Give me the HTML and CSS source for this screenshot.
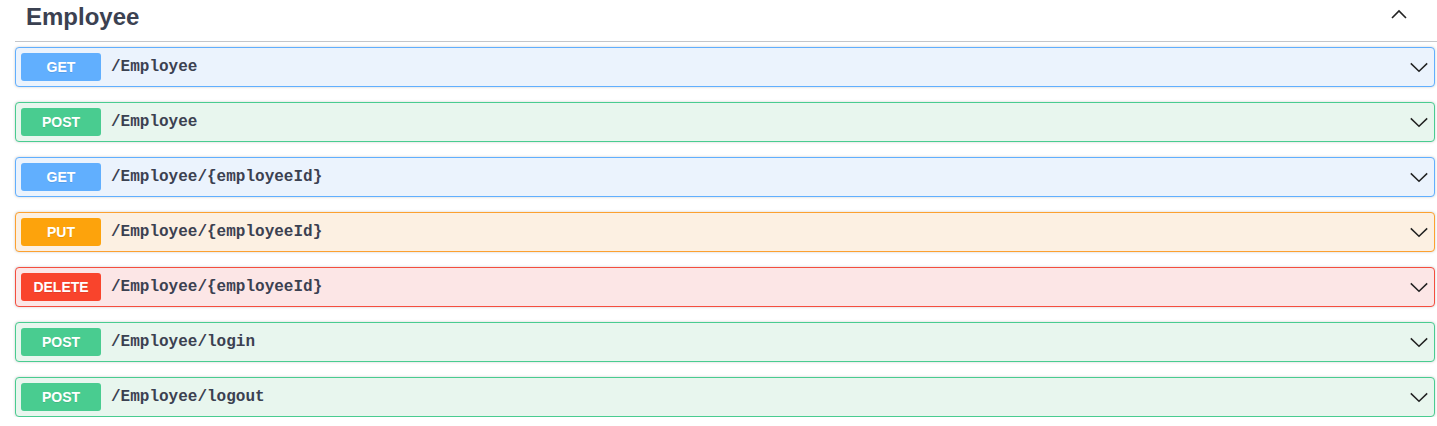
FILE: index.html
```html
<!DOCTYPE html>
<html>
<head>
<meta charset="utf-8">
<link rel="stylesheet" href="styles.css">
</head>
<body>
<div class="tag-section">
  <h4 class="tag-heading">
    <span class="tag-name">Employee</span>
    <span class="tag-toggle">
      <svg width="16" height="10" viewBox="0 0 16 10"><polyline points="1,9 8,2 15,9" fill="none" stroke="#222" stroke-width="1.6"/></svg>
    </span>
  </h4>
  <div class="ops">
    <div class="op op-get"><span class="method">GET</span><span class="path">/Employee</span><svg class="arrow" width="20" height="20" viewBox="0 0 20 20"><polyline points="1.8,6.4 10,14.2 18.2,6.4" fill="none" stroke="#222" stroke-width="1.5"/></svg></div>
    <div class="op op-post"><span class="method">POST</span><span class="path">/Employee</span><svg class="arrow" width="20" height="20" viewBox="0 0 20 20"><polyline points="1.8,6.4 10,14.2 18.2,6.4" fill="none" stroke="#222" stroke-width="1.5"/></svg></div>
    <div class="op op-get"><span class="method">GET</span><span class="path">/Employee/{employeeId}</span><svg class="arrow" width="20" height="20" viewBox="0 0 20 20"><polyline points="1.8,6.4 10,14.2 18.2,6.4" fill="none" stroke="#222" stroke-width="1.5"/></svg></div>
    <div class="op op-put"><span class="method">PUT</span><span class="path">/Employee/{employeeId}</span><svg class="arrow" width="20" height="20" viewBox="0 0 20 20"><polyline points="1.8,6.4 10,14.2 18.2,6.4" fill="none" stroke="#222" stroke-width="1.5"/></svg></div>
    <div class="op op-delete"><span class="method">DELETE</span><span class="path">/Employee/{employeeId}</span><svg class="arrow" width="20" height="20" viewBox="0 0 20 20"><polyline points="1.8,6.4 10,14.2 18.2,6.4" fill="none" stroke="#222" stroke-width="1.5"/></svg></div>
    <div class="op op-post"><span class="method">POST</span><span class="path">/Employee/login</span><svg class="arrow" width="20" height="20" viewBox="0 0 20 20"><polyline points="1.8,6.4 10,14.2 18.2,6.4" fill="none" stroke="#222" stroke-width="1.5"/></svg></div>
    <div class="op op-post"><span class="method">POST</span><span class="path">/Employee/logout</span><svg class="arrow" width="20" height="20" viewBox="0 0 20 20"><polyline points="1.8,6.4 10,14.2 18.2,6.4" fill="none" stroke="#222" stroke-width="1.5"/></svg></div>
  </div>
</div>
</body>
</html>
```

FILE: styles.css
```css
html, body {
  margin: 0;
  padding: 0;
  background: #ffffff;
}
body {
  font-family: "Liberation Sans", Arial, sans-serif;
  color: #3b4151;
}
.tag-section {
  padding-left: 15px;
}
.tag-heading {
  display: flex;
  align-items: center;
  margin: 0 0 5px 0;
  padding: 2px 0 10px 11px;
  border-bottom: 1px solid rgba(59, 65, 81, 0.3);
  font-size: 24px;
  line-height: 29px;
  font-weight: bold;
  color: #3b4151;
}
.tag-name {
  flex: 1;
}
.tag-toggle {
  display: flex;
  margin-right: 30px;
  margin-top: -6px;
}
.ops {
  display: flex;
  flex-direction: column;
  gap: 15px;
  margin-right: 2px;
}
.op {
  display: flex;
  align-items: center;
  height: 28px;
  padding: 5px;
  border: 1px solid;
  border-radius: 4px;
  box-shadow: 0 0 3px rgba(0, 0, 0, 0.19);
}
.method {
  display: block;
  width: 80px;
  height: 28px;
  line-height: 28px;
  text-align: center;
  border-radius: 3px;
  color: #ffffff;
  font-size: 14px;
  font-weight: bold;
  text-shadow: 0 1px 0 rgba(0, 0, 0, 0.1);
}
.path {
  flex: 1;
  padding: 0 10px;
  font-family: "Liberation Mono", "Courier New", monospace;
  font-weight: bold;
  font-size: 16px;
  color: #3b4151;
}
.arrow {
  display: block;
}
.op-get {
  background: #ebf3fd;
  border-color: #61affe;
}
.op-get .method {
  background: #61affe;
}
.op-post {
  background: #e8f6ee;
  border-color: #49cc90;
}
.op-post .method {
  background: #49cc90;
}
.op-put {
  background: #fcf0e2;
  border-color: #fca130;
}
.op-put .method {
  background: #fda30c;
}
.op-delete {
  background: #fce6e6;
  border-color: #f44e3f;
}
.op-delete .method {
  background: #f9442c;
}
```
